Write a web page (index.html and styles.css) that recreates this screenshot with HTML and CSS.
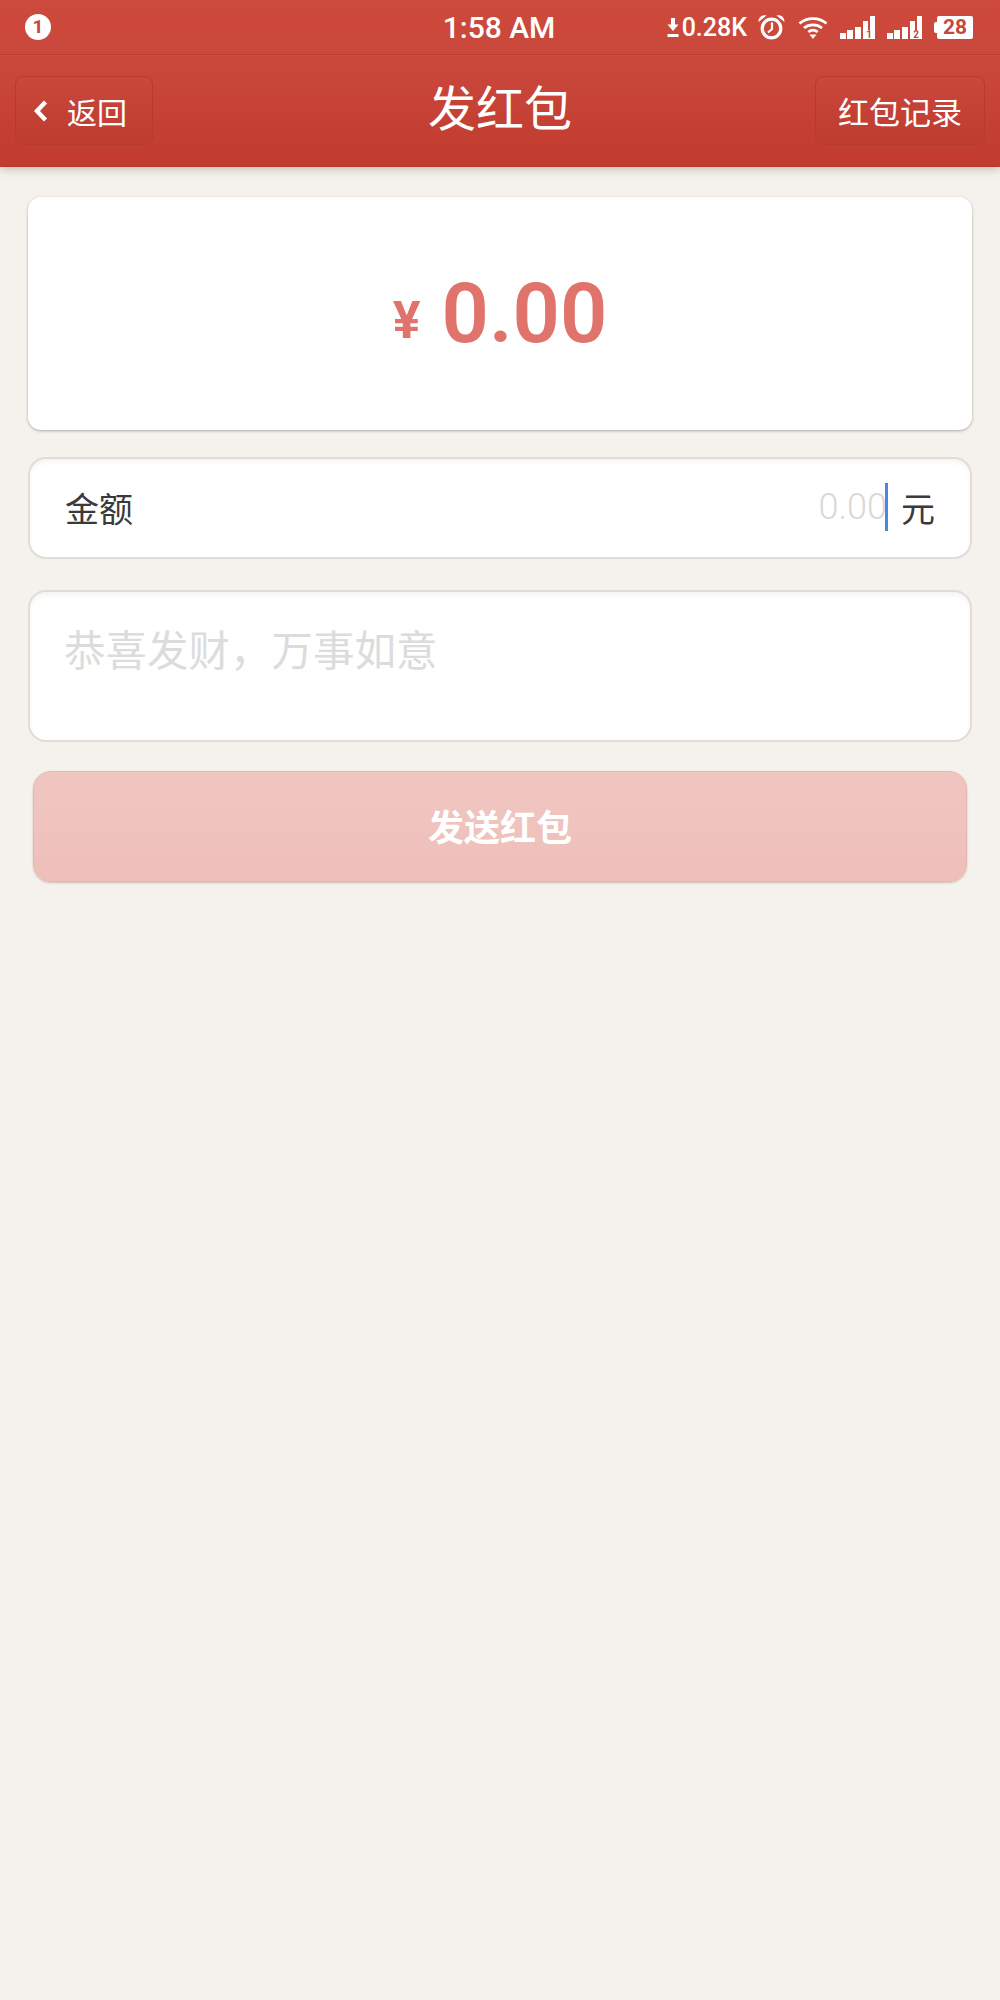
FILE: index.html
```html
<!DOCTYPE html>
<html lang="zh-CN">
<head>
    <meta charset="UTF-8">
    <meta name="viewport" content="width=device-width, initial-scale=1.0">
    <title>发红包</title>
    <link rel="stylesheet" href="styles.css">
</head>
<body>

<header class="top">
    <div class="status-bar">
        <div class="status-left">
            <span class="notify-badge">1</span>
        </div>
        <div class="status-time">1:58 AM</div>
        <div class="status-right">
            <svg class="icon-down" width="12" height="19" viewBox="0 0 12 19">
                <path d="M4 0h4v6.500h3.500L6 13 .5 6.500H4z" fill="#fff"/>
                <rect x="0.500" y="16" width="11" height="3" fill="#fff"/>
            </svg>
            <span class="net-speed">0.28K</span>
            <svg class="icon-alarm" width="27" height="26" viewBox="0 0 27 26">
                <circle cx="13.500" cy="14.500" r="9.300" fill="none" stroke="#fff" stroke-width="3.200"/>
                <path d="M14 8.500v6.500l-4 3.500" fill="none" stroke="#fff" stroke-width="2.200"/>
                <path d="M.5 8C.5 3 4 .5 8.500 1.500zM26.500 8C26.500 3 23 .5 18.500 1.500z" fill="#fff"/>
            </svg>
            <svg class="icon-wifi" width="30" height="23" viewBox="0 0 30 23">
                <path d="M1.500 7.500C9 1 21 1 28.500 7.500M6 12c5-4.200 13-4.200 18 0M10.300 16c2.800-2.200 6.600-2.200 9.400 0" fill="none" stroke="#fff" stroke-width="2.800"/>
                <path d="M11.500 18.500h7L15 23z" fill="#fff"/>
            </svg>
            <svg class="icon-signal" width="35" height="23" viewBox="0 0 35 23">
                <rect x="0" y="17" width="6" height="6" fill="#fff"/>
                <rect x="7" y="14" width="6" height="9" fill="#fff"/>
                <rect x="15" y="11" width="6" height="12" fill="#fff"/>
                <rect x="23" y="5" width="5" height="18" fill="#fff"/>
                <rect x="30" y="0" width="5" height="23" fill="#fff"/>
                <rect x="23" y="14" width="12" height="9" fill="#fff"/>
                <text x="29" y="22" class="sim-num">1</text>
            </svg>
            <svg class="icon-signal" width="35" height="23" viewBox="0 0 35 23">
                <rect x="0" y="17" width="6" height="6" fill="#fff"/>
                <rect x="7" y="14" width="6" height="9" fill="#fff"/>
                <rect x="15" y="11" width="6" height="12" fill="#fff"/>
                <rect x="23" y="5" width="5" height="18" fill="#fff"/>
                <rect x="30" y="0" width="5" height="23" fill="#fff"/>
                <rect x="23" y="14" width="12" height="9" fill="#fff"/>
                <text x="29" y="22" class="sim-num">2</text>
            </svg>
            <div class="battery">
                <span class="battery-tip"></span>
                <span class="battery-body">28</span>
            </div>
        </div>
    </div>

    <nav class="nav-bar">
        <a class="nav-btn back-btn">
            <svg width="16" height="24" viewBox="0 0 16 24">
                <path d="M12.500 3L4 12l8.500 9" fill="none" stroke="#fff" stroke-width="4.400"/>
            </svg>
            <span>返回</span>
        </a>
        <h1 class="nav-title">发红包</h1>
        <a class="nav-btn record-btn">红包记录</a>
    </nav>
</header>

<main class="content">
    <div class="amount-card">
        <span class="yen">¥</span>
        <span class="amount">0.00</span>
    </div>

    <div class="field amount-field">
        <span class="field-label">金额</span>
        <span class="field-input">
            <span class="placeholder-num">0.00</span>
            <span class="caret"></span>
        </span>
        <span class="field-unit">元</span>
    </div>

    <div class="field wish-field">恭喜发财，万事如意</div>

    <button class="send-button">发送红包</button>
</main>

</body>
</html>
```

FILE: styles.css
```css
body {
    margin: 0;
    padding: 0;
    min-height: 2000px;
    background-color: #f5f2ed;
    font-family: Roboto, "Noto Sans CJK SC", sans-serif;
}

.top {
    height: 166px;
    background: linear-gradient(#cc493c, #ca473b 40%, #c13b2e);
    box-shadow: 0 1px 0 #b5392d, 0 3px 9px rgba(90, 50, 40, 0.3);
}

/* status bar */
.status-bar {
    display: grid;
    grid-template-columns: 1fr auto 1fr;
    align-items: center;
    height: 54px;
    padding: 0 27px 0 25px;
    border-bottom: 1px solid #b83e32;
    box-shadow: 0 1px 0 #cf4e41;
    color: white;
}
.status-left {
    display: flex;
}
.notify-badge {
    width: 26px;
    height: 26px;
    border-radius: 50%;
    background-color: white;
    color: #c9463a;
    font-size: 19px;
    font-weight: 700;
    line-height: 26px;
    text-align: center;
}
.status-time {
    font-size: 30px;
    font-weight: 500;
}
.status-right {
    display: flex;
    align-items: center;
    justify-content: flex-end;
}
.icon-down {
    margin-right: 3px;
}
.net-speed {
    font-size: 25px;
    font-weight: 500;
    margin-right: 11px;
}
.icon-alarm {
    margin-right: 13px;
}
.icon-wifi {
    margin-right: 12px;
}
.icon-signal {
    margin-right: 12px;
}
.sim-num {
    font-family: Roboto, sans-serif;
    font-size: 10px;
    font-weight: 700;
    fill: #c9463a;
    text-anchor: middle;
}
.battery {
    display: flex;
    align-items: center;
}
.battery-tip {
    width: 3px;
    height: 11px;
    background-color: white;
    border-radius: 2px 0 0 2px;
}
.battery-body {
    width: 36px;
    height: 23px;
    background-color: white;
    border-radius: 2px;
    color: #c9463a;
    font-size: 21px;
    font-weight: 700;
    line-height: 23px;
    text-align: center;
}

/* nav bar */
.nav-bar {
    display: grid;
    grid-template-columns: 170px 1fr 170px;
    align-items: center;
    height: 111px;
    padding: 0 15px;
    color: white;
}
.nav-title {
    margin: 0 0 2px;
    font-size: 48px;
    font-weight: 400;
    line-height: 1;
    text-align: center;
}
.nav-btn {
    display: flex;
    align-items: center;
    box-sizing: border-box;
    height: 69px;
    border: 1px solid #b53b2f;
    border-radius: 8px;
    background: linear-gradient(#c9483b, #be3b2f);
    font-size: 30px;
}
.back-btn {
    width: 138px;
    padding-left: 17px;
    gap: 18px;
}
.record-btn {
    justify-content: center;
    font-size: 31px;
}

/* form */
.content {
    display: flex;
    flex-direction: column;
    padding: 31px 28px 0;
}
.amount-card {
    display: flex;
    align-items: center;
    justify-content: center;
    gap: 21px;
    height: 233px;
    box-sizing: border-box;
    background-color: white;
    border-radius: 13px;
    box-shadow: 0 1px 3px rgba(70, 60, 50, 0.4);
    color: #e0736b;
}
.yen {
    font-size: 52px;
    font-weight: 700;
    margin-top: 14px;
}
.amount {
    font-size: 83px;
    font-weight: 600;
    line-height: 1;
}
.field {
    box-sizing: border-box;
    background-color: white;
    border: 2px solid #e0dcd6;
    border-radius: 18px;
    box-shadow: inset 0 3px 4px rgba(120, 110, 100, 0.08);
}
.amount-field {
    display: flex;
    align-items: center;
    height: 102px;
    margin-top: 27px;
    padding: 0 35px 2px;
    color: #3a3a3a;
    font-size: 34px;
}
.field-label {
    flex: 1;
}
.field-input {
    display: flex;
    align-items: center;
}
.placeholder-num {
    color: #d8d8d8;
    font-size: 36px;
    font-weight: 300;
    margin-right: -2px;
}
.caret {
    width: 3px;
    height: 48px;
    background-color: #4b86e4;
}
.field-unit {
    margin-left: 13px;
}
.wish-field {
    height: 152px;
    margin-top: 31px;
    padding: 30px 34px 0;
    color: #dcdcdc;
    font-size: 41.500px;
    line-height: 60px;
}
.send-button {
    height: 111px;
    margin: 29px 5px 0;
    padding: 0 0 4px;
    border: 1px solid #e6b6b0;
    border-radius: 18px;
    background: linear-gradient(#f0c6c1, #efbfba);
    box-shadow: 0 1px 2px rgba(120, 60, 50, 0.3);
    color: white;
    font-family: inherit;
    font-size: 36px;
    font-weight: 700;
}
```
